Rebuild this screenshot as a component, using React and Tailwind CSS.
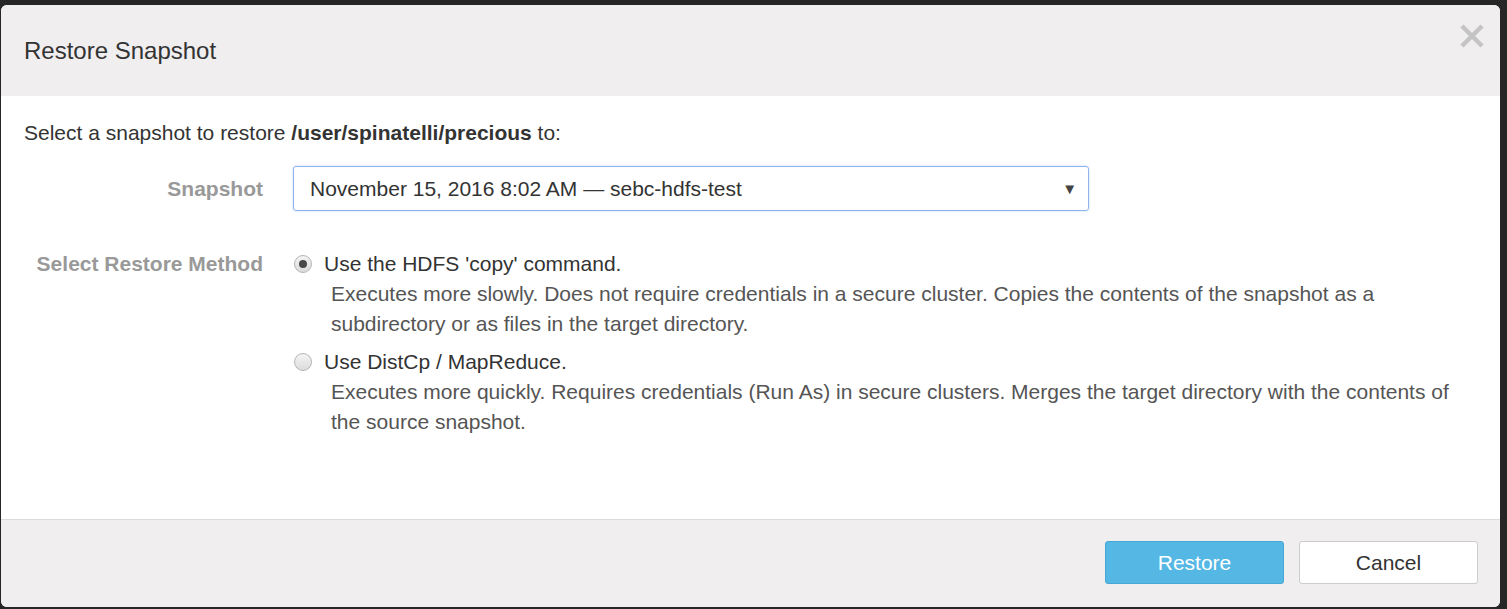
import React, { useState } from "react";

const font = { fontFamily: '"Liberation Sans", Arial, sans-serif' };

function Radio({ checked }) {
  return (
    <span className="flex h-[18px] w-[18px] shrink-0 items-center justify-center rounded-full border border-[#b5b5b5] bg-gradient-to-b from-[#f4f4f4] to-[#dcdcdc]">
      {checked && <span className="h-[8px] w-[8px] rounded-full bg-[#4a4a4a]" />}
    </span>
  );
}

export default function App() {
  const [method, setMethod] = useState("copy");

  const options = [
    {
      id: "copy",
      title: "Use the HDFS 'copy' command.",
      desc: "Executes more slowly. Does not require credentials in a secure cluster. Copies the contents of the snapshot as a subdirectory or as files in the target directory.",
    },
    {
      id: "distcp",
      title: "Use DistCp / MapReduce.",
      desc: "Executes more quickly. Requires credentials (Run As) in secure clusters. Merges the target directory with the contents of the source snapshot.",
    },
  ];

  return (
    <div className="h-[609px] w-full bg-[#262626] pt-[5px] pl-[1px] pr-[7px] pb-[2px]" style={font}>
      <div className="flex h-full flex-col overflow-hidden rounded-[6px] bg-white">
        {/* Header */}
        <div className="flex h-[91px] shrink-0 items-start justify-between bg-[#f0eeef] pl-[23px] pr-[16px]">
          <h1 className="mt-[28px] text-[24px] leading-[36px] text-[#333]">Restore Snapshot</h1>
          <button className="mt-[19px] text-[#c4c4c4]">
            <svg width="24" height="24" viewBox="0 0 24 24">
              <path d="M2 2 L22 22 M22 2 L2 22" stroke="currentColor" strokeWidth="4.5" />
            </svg>
          </button>
        </div>

        {/* Body */}
        <div className="flex-1 border-b border-[#dcdcdc] pl-[23px] pr-[24px] pt-[22px] text-[21px] leading-[30px] text-[#333]">
          <p>
            Select a snapshot to restore <b>/user/spinatelli/precious</b> to:
          </p>

          <div className="mt-[18px] flex items-center">
            <label className="w-[239px] shrink-0 text-right font-bold text-[#999]">Snapshot</label>
            <div className="ml-[30px] flex h-[45px] w-[796px] items-center justify-between rounded-[3px] border border-[#8fb3ec] pl-[16px] pr-[11px] shadow-[0_0_2px_rgba(120,160,230,0.5)]">
              <span>November 15, 2016 8:02 AM — sebc-hdfs-test</span>
              <span className="text-[15px] text-[#444]">▼</span>
            </div>
          </div>

          <div className="mt-[38px] flex items-start">
            <label className="w-[239px] shrink-0 text-right font-bold text-[#999]">Select Restore Method</label>
            <div className="ml-[31px] flex flex-col gap-[8px]">
              {options.map((o) => (
                <div key={o.id} onClick={() => setMethod(o.id)} className="cursor-pointer">
                  <div className="flex items-center gap-[12px]">
                    <Radio checked={method === o.id} />
                    <span>{o.title}</span>
                  </div>
                  <p className="pl-[37px] text-[#555]">{o.desc}</p>
                </div>
              ))}
            </div>
          </div>
        </div>

        {/* Footer */}
        <div className="flex h-[87px] shrink-0 items-start justify-end gap-[15px] bg-[#f0eeef] pt-[21px] pr-[22px] text-[21px]">
          <button className="h-[43px] w-[179px] rounded-[3px] border border-[#46a6d6] bg-[#55b7e4] text-white">Restore</button>
          <button className="h-[43px] w-[179px] rounded-[3px] border border-[#cccccc] bg-white text-[#333]">Cancel</button>
        </div>
      </div>
    </div>
  );
}
